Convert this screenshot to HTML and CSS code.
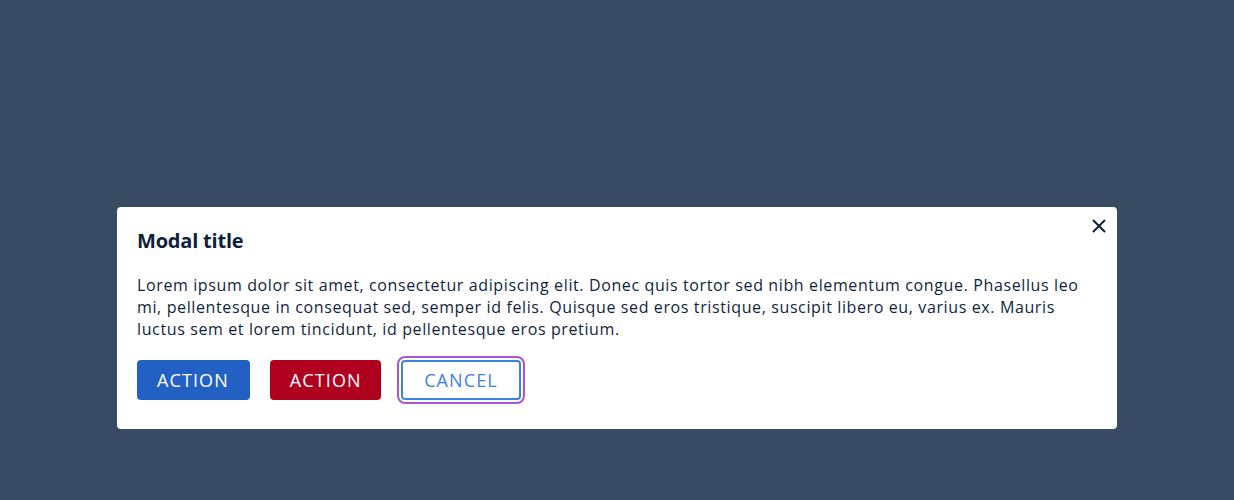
FILE: index.html
```html
<!DOCTYPE html>
<html>
<head>
<meta charset="utf-8">
<link rel="stylesheet" href="styles.css">
</head>
<body>
<div class="overlay">
  <div class="modal">
    <button class="close" aria-label="Close">
      <svg width="16" height="16" viewBox="0 0 16 16"><path d="M2 2L14 14M14 2L2 14" stroke="#0f1f3d" stroke-width="2" fill="none"/></svg>
    </button>
    <h2 class="title">Modal title</h2>
    <p class="body">Lorem ipsum dolor sit amet, consectetur adipiscing elit. Donec quis tortor sed nibh elementum congue. Phasellus leo mi, pellentesque in consequat sed, semper id felis. Quisque sed eros tristique, suscipit libero eu, varius ex. Mauris luctus sem et lorem tincidunt, id pellentesque eros pretium.</p>
    <div class="actions">
      <button class="btn primary">ACTION</button>
      <button class="btn danger">ACTION</button>
      <button class="btn outline focused">CANCEL</button>
    </div>
  </div>
</div>
</body>
</html>
```
FILE: styles.css
```css
html, body {
  margin: 0;
  padding: 0;
  background: #394a63;
  font-family: "Open Sans", "Noto Sans", sans-serif;
}
.overlay {
  width: 1234px;
  height: 500px;
  box-sizing: border-box;
  padding-top: 207px;
  display: flex;
  align-items: flex-start;
  justify-content: center;
}
.modal {
  position: relative;
  width: 1000px;
  box-sizing: border-box;
  background: #fff;
  border-radius: 4px;
  padding: 20px 20px 29px 20px;
  color: #0f1f3d;
}
.close {
  position: absolute;
  top: 11px;
  right: 10px;
  background: none;
  border: none;
  padding: 0;
  width: 16px;
  height: 16px;
  cursor: pointer;
}
.close svg { display: block; }
.title {
  margin: 0;
  font-size: 20px;
  font-weight: 700;
  line-height: 28px;
  letter-spacing: -0.2px;
}
.body {
  margin: 19px 0 0 0;
  font-size: 16px;
  line-height: 22px;
  letter-spacing: 0.62px;
}
.actions {
  display: flex;
  gap: 20px;
  margin-top: 20px;
}
.btn {
  height: 40px;
  box-sizing: border-box;
  border-radius: 4px;
  padding: 0 19px 0 18px;
  font-family: "Open Sans", "Noto Sans", sans-serif;
  font-size: 18px;
  letter-spacing: 1.1px;
  border: 2px solid transparent;
  color: #fff;
}
.primary { background: #2360c4; border-color: #2360c4; }
.danger { background: #b00020; border-color: #b00020; padding-right: 17.5px; }
.outline {
  background: #fff;
  color: #3b82e6;
  border-color: #3b82e6;
  padding: 0 21px 0 21px;
}
.focused {
  outline: 2px solid #a855d8;
  outline-offset: 2px;
}
```
